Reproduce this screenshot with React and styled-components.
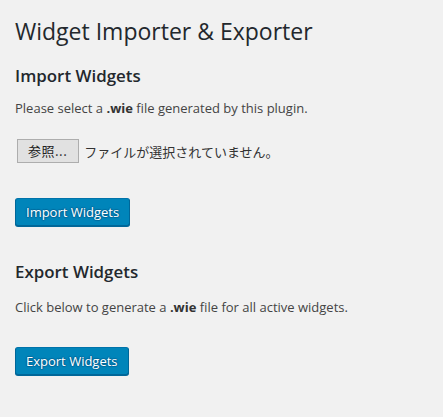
import React from "react";
import styled, { createGlobalStyle } from "styled-components";

const GlobalStyle = createGlobalStyle`
  html, body {
    margin: 0;
    padding: 0;
    background: #f1f1f1;
  }
  body {
    font-family: "Open Sans", "Noto Sans", sans-serif;
    font-size: 13px;
    color: #444;
    min-height: 417px;
  }
`;

const Wrap = styled.div`
  display: flex;
  flex-direction: column;
  align-items: flex-start;
  padding: 17px 15px 0;
`;

const Title = styled.h1`
  margin: 0;
  font-size: 23px;
  line-height: 29px;
  font-weight: 400;
  color: #23282d;
`;

const Heading = styled.h2`
  margin: ${(p) => (p.$first ? "18px" : "34px")} 0 0;
  font-size: 16.9px;
  line-height: 1.4;
  font-weight: 600;
  color: #23282d;
`;

const Text = styled.p`
  margin: ${(p) => (p.$gap || 11)}px 0 0;
  font-size: 13px;
  line-height: 1.5;
  color: #444;
  b {
    font-weight: 700;
    color: #333;
  }
`;

const FileRow = styled.div`
  display: flex;
  align-items: center;
  gap: 5px;
  margin: 21px 0 0 2px;
  font-family: "Noto Sans CJK JP", sans-serif;
  font-size: 13px;
  color: #333;
`;

const Browse = styled.button`
  height: 24px;
  padding: 0 11px 0 10px;
  background: #e1e1e1;
  border: 1px solid #adadad;
  border-radius: 0;
  font-family: "Noto Sans CJK JP", sans-serif;
  font-size: 13px;
  color: #222;
  line-height: 22px;
  letter-spacing: 0.5px;
`;

const Primary = styled.button`
  margin-top: ${(p) => p.$gap}px;
  height: 28px;
  padding: 0 10px 1px;
  background: #0085ba;
  border: 1px solid #0073aa;
  border-color: #0073aa #006799 #006799;
  border-radius: 3px;
  box-shadow: 0 1px 0 #006799;
  color: #fff;
  font-family: "Open Sans", sans-serif;
  font-size: 13px;
  line-height: 26px;
  text-shadow: 0 -1px 1px #006799, 1px 0 1px #006799, 0 1px 1px #006799,
    -1px 0 1px #006799;
  cursor: pointer;
`;

export default function App() {
  return (
    <>
      <GlobalStyle />
      <Wrap>
        <Title>Widget Importer &amp; Exporter</Title>

        <Heading $first>Import Widgets</Heading>
        <Text>
          Please select a <b>.wie</b> file generated by this plugin.
        </Text>
        <FileRow>
          <Browse>参照...</Browse>
          <span>ファイルが選択されていません。</span>
        </FileRow>
        <Primary $gap={35}>Import Widgets</Primary>

        <Heading>Export Widgets</Heading>
        <Text $gap={14}>
          Click below to generate a <b>.wie</b> file for all active widgets.
        </Text>
        <Primary $gap={30}>Export Widgets</Primary>
      </Wrap>
    </>
  );
}
